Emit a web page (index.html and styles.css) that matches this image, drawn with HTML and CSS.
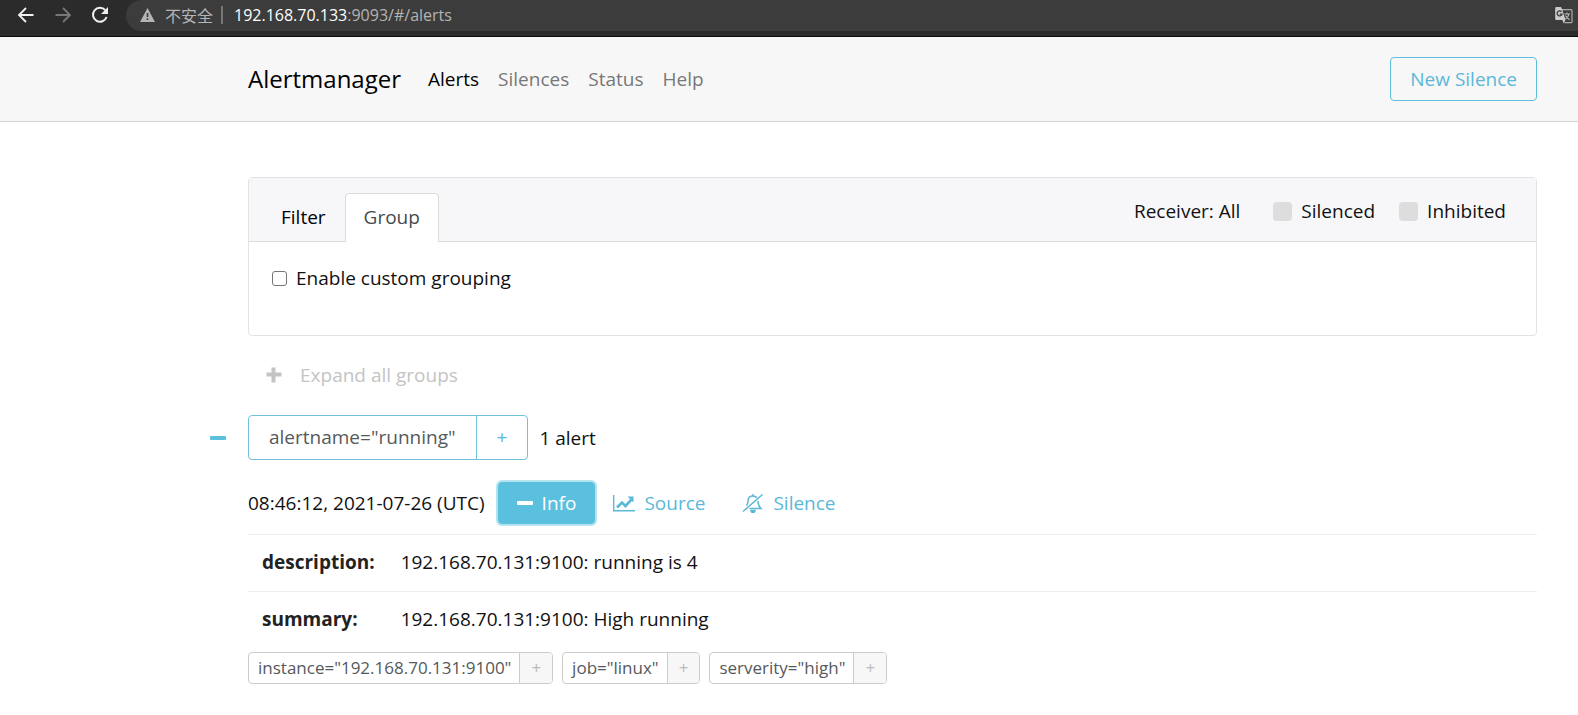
FILE: index.html
```html
<!DOCTYPE html>
<html lang="en">
<head>
<meta charset="utf-8">
<title>Alertmanager</title>
<link rel="stylesheet" href="styles.css">
</head>
<body>
<div class="browser-bar">
  <div class="browser-nav">
    <button class="browser-button" aria-label="Back"><svg width="18" height="18" viewBox="0 0 18 18" fill="none" stroke="#f0f0f0" stroke-width="1.800"><path d="M16.500 9H2.500M9 2L2 9l7 7"/></svg></button>
    <button class="browser-button" aria-label="Forward"><svg width="18" height="18" viewBox="0 0 18 18" fill="none" stroke="#777" stroke-width="1.800"><path d="M1.500 9h14M9 2l7 7-7 7"/></svg></button>
    <button class="browser-button" aria-label="Reload"><svg width="18" height="18" viewBox="0 0 18 18"><path d="M14.300 4.200A7 7 0 1 0 15.600 11" fill="none" stroke="#f0f0f0" stroke-width="2"/><path d="M17 1v7h-7z" fill="#f0f0f0"/></svg></button>
  </div>
  <div class="address">
    <svg width="15" height="14" viewBox="0 0 15 14"><path d="M7.500 0L15 14H0z" fill="#b4b4b4"/><path d="M6.700 5h1.600v4H6.700zM6.700 10.300h1.600V12H6.700z" fill="#3c3c3c"/></svg>
    <span class="insecure" lang="zh">不安全</span>
    <span class="divider"></span>
    <span class="url"><span class="host">192.168.70.133</span>:9093/#/alerts</span>
    <button class="browser-button translate" aria-label="Translate"><svg width="18" height="17" viewBox="0 0 18 17"><path d="M7 2.700h9a1 1 0 0 1 1 1v11a1 1 0 0 1-1 1H9.500" fill="none" stroke="#aaa" stroke-width="1.200"/><path d="M1.500 0H6l1.200 2.500L10.500 13l-2 3.500L7.500 13h-6A1.300 1.300 0 0 1 .2 11.700V1.300A1.300 1.300 0 0 1 1.500 0z" fill="#ccc"/><path d="M6.500 4.800A2.500 2.500 0 1 0 7 7.200H4.700" fill="none" stroke="#3c3c3c" stroke-width="1.300"/><path d="M9.500 7H15M12 5.500V7m2 0c-.5 2.500-2 4-3.500 5M10.500 8.500c1 2 2.500 3.200 4 4.200" fill="none" stroke="#bbb" stroke-width="1.100"/></svg></button>
  </div>
</div>

<header class="navbar">
  <a class="brand" href="#/">Alertmanager</a>
  <nav class="nav-links">
    <a class="active" href="#/alerts">Alerts</a>
    <a href="#/silences">Silences</a>
    <a href="#/status">Status</a>
    <a href="#/help">Help</a>
  </nav>
  <a class="button outline new-silence" href="#/silences/new">New Silence</a>
</header>

<main class="content">
  <section class="card">
    <div class="card-header">
      <div class="tabs">
        <button class="tab">Filter</button>
        <button class="tab selected">Group</button>
      </div>
      <div class="options">
        <button class="receiver">Receiver: All</button>
        <label class="option"><input class="soft-check" type="checkbox">Silenced</label>
        <label class="option"><input class="soft-check" type="checkbox">Inhibited</label>
      </div>
    </div>
    <div class="card-body">
      <label class="option"><input class="check" type="checkbox">Enable custom grouping</label>
    </div>
  </section>

  <button class="expand"><svg width="16" height="16" viewBox="0 0 16 16"><path d="M5.500 0.500h4v5h6v4h-6v6h-4v-6h-5v-4h5z" fill="currentColor"/></svg>Expand all groups</button>

  <section class="group">
    <div class="group-head">
      <button class="collapse" aria-label="Collapse group"><svg width="16" height="4" viewBox="0 0 16 4"><rect width="16" height="4" rx="1" fill="currentColor"/></svg></button>
      <div class="matcher">
        <button class="matcher-label">alertname="running"</button>
        <button class="matcher-add" aria-label="Add filter">+</button>
      </div>
      <span>1 alert</span>
    </div>

    <div class="alert-head">
      <time>08:46:12, 2021-07-26 (UTC)</time>
      <button class="button info"><svg width="16" height="4" viewBox="0 0 16 4"><rect width="16" height="4" rx="1" fill="currentColor"/></svg>Info</button>
      <a class="action" href="#source"><svg width="22" height="17" viewBox="0 0 22 17"><path d="M.7 0v15.800H22" fill="none" stroke="currentColor" stroke-width="1.400"/><path d="M4 12.500l5-5 3.500 3.500 6-6.500" fill="none" stroke="currentColor" stroke-width="2.600"/><path d="M14.500 1.500h6v6z" fill="currentColor"/></svg>Source</a>
      <a class="action" href="#silence"><svg width="22" height="20" viewBox="0 0 22 20" fill="none" stroke="currentColor" stroke-width="1.500"><path d="M1 18.500L20.500 1.500"/><path d="M4.500 12.500C6 11 6 9.500 6 8c0-3 2-5 5-5 1.800 0 3 .6 4 1.800M11 3V1M16 8c0 4 .8 5.500 3 7.500H7.500"/><path d="M9 17.500a2 2 0 0 0 4 0z" fill="currentColor"/></svg>Silence</a>
    </div>

    <table class="annotations">
      <tbody>
        <tr><th scope="row">description:</th><td>192.168.70.131:9100: running is 4</td></tr>
        <tr><th scope="row">summary:</th><td>192.168.70.131:9100: High running</td></tr>
      </tbody>
    </table>

    <div class="tags">
      <div class="tag"><button class="tag-label">instance="192.168.70.131:9100"</button><button class="tag-add" aria-label="Add instance filter">+</button></div>
      <div class="tag"><button class="tag-label">job="linux"</button><button class="tag-add" aria-label="Add job filter">+</button></div>
      <div class="tag"><button class="tag-label">serverity="high"</button><button class="tag-add" aria-label="Add serverity filter">+</button></div>
    </div>
  </section>
</main>
</body>
</html>
```
FILE: styles.css
```css
* { box-sizing: border-box; }

body {
  margin: 0;
  background: #fff;
  color: #111;
  font: 19px/30px "Open Sans", "Noto Sans", "Noto Sans CJK SC", sans-serif;
}

button {
  margin: 0;
  padding: 0;
  border: 0;
  background: none;
  color: inherit;
  font: inherit;
}

a { color: inherit; text-decoration: none; }
svg { flex: none; }

.browser-bar {
  display: flex;
  height: 37px;
  padding-bottom: 5px;
  background: #2b2b2b;
  border-bottom: 1px solid #0c0c0c;
}

.browser-nav {
  display: flex;
  align-items: center;
  gap: 19px;
  padding: 0 17px 2px;
}

.browser-button { display: flex; }

.address {
  display: flex;
  flex: 1;
  align-items: center;
  padding: 0 5px 1px 14px;
  background: #3c3c3c;
  border-radius: 16px 0 0 16px;
  color: #b4b4b4;
  font-size: 16px;
  line-height: 24px;
}

.insecure { margin-left: 10px; font-family: "Noto Sans CJK SC", sans-serif; }

.divider {
  width: 2px;
  height: 18px;
  margin: 0 11px 0 8px;
  background: #777;
}

.host { color: #fff; }
.translate { margin-left: auto; }

.navbar {
  display: flex;
  align-items: center;
  padding: 20px 41px 20px 248px;
  background: #f7f7f7;
  border-bottom: 1px solid #d5d5d5;
}

.brand { color: #000; font-size: 24px; }

.nav-links {
  display: flex;
  gap: 19px;
  margin-left: 27px;
  color: #777;
}

.nav-links .active { color: #000; }

.button {
  display: flex;
  align-items: center;
  padding: 6px 19px;
  border: 1px solid #5bc0de;
  border-radius: 4px;
}

.outline { color: #5bb8d8; }
.new-silence { margin-left: auto; }

.content { padding: 55px 41px 24px 248px; }

.card {
  border: 1px solid #e3e3e3;
  border-radius: 4px;
}

.card-header {
  display: flex;
  justify-content: space-between;
  padding: 15px 30px 0 12px;
  background: #f7f7f9;
  border-bottom: 1px solid #dcdcdc;
}

.tabs { display: flex; margin-bottom: -1px; }

.tab {
  padding: 8px 18px 10px;
  border: 1px solid transparent;
  border-bottom: 0;
  border-radius: 4px 4px 0 0;
  color: #000;
}

.tab:first-child { padding-left: 19px; }

.tab.selected {
  background: #fff;
  border-color: #dcdcdc;
  color: #464a4c;
}

.options {
  display: flex;
  align-items: center;
  gap: 24px;
  padding-bottom: 12px;
}

.receiver { margin-right: 9px; }

.option {
  display: inline-flex;
  align-items: center;
  gap: 9px;
}

.soft-check {
  appearance: none;
  width: 19px;
  height: 19px;
  margin: 0;
  background: #ddd;
  border-radius: 4px;
}

.check {
  appearance: none;
  width: 15px;
  height: 15px;
  margin: 0;
  background: #fff;
  border: 1px solid #767676;
  border-radius: 3px;
}

.card-body { padding: 21px 23px 42px; }
.card-body .option { display: flex; }

.expand {
  display: flex;
  align-items: center;
  gap: 18px;
  margin-top: 24px;
  padding-left: 18px;
  color: #c4c4c4;
}

.group { margin-top: 25px; }

.group-head {
  display: flex;
  align-items: center;
  gap: 11px;
}

.collapse {
  width: 16px;
  margin-left: -38px;
  margin-right: 11px;
  color: #5bc0de;
}

.collapse svg { display: block; }

.matcher {
  display: flex;
  border: 1px solid #6fc0d8;
  border-radius: 4px;
}

.matcher-label { padding: 6px 20px 7px; color: #55595c; }

.matcher-add {
  padding: 6px 20px 7px;
  border-left: 1px solid #6fc0d8;
  color: #5bb8d8;
}

.alert-head {
  display: flex;
  align-items: center;
  padding: 22px 0 10px;
}

.info {
  gap: 9px;
  margin: 0 18px 0 13px;
  padding: 5px 18px;
  background: #5bc0de;
  box-shadow: 0 0 0 2px #b5e3f0;
  color: #fff;
}

.action {
  display: flex;
  align-items: center;
  gap: 9px;
  margin-right: 37px;
  color: #5bb8d8;
}

.annotations {
  width: 100%;
  border-collapse: collapse;
}

.annotations th,
.annotations td {
  padding: 12px 12px 14px 14px;
  border-top: 1px solid #eceeef;
  text-align: left;
}

.annotations th { width: 1px; color: #222; }

.tags { display: flex; flex-wrap: wrap; gap: 9px; margin-top: 4px; }

.tag {
  display: flex;
  overflow: hidden;
  border: 1px solid #ccc;
  border-radius: 4px;
  color: #55595c;
  font-size: 17px;
}

.tag-label { padding: 0 8px 0 9px; }

.tag-add {
  padding: 0 11px;
  background: #f7f7f7;
  border-left: 1px solid #ccc;
  color: #bbb;
}
```
